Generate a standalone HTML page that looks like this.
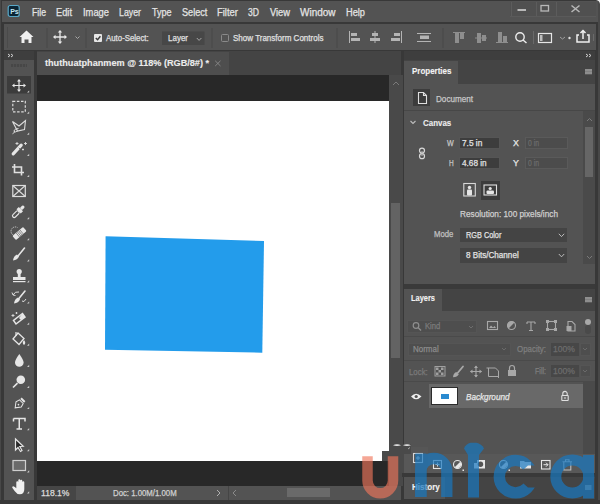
<!DOCTYPE html>
<html><head><meta charset="utf-8">
<style>
*{margin:0;padding:0;box-sizing:border-box}
html,body{width:600px;height:504px;overflow:hidden;background:#2e2e2e;font-family:"Liberation Sans",sans-serif;}
.a{position:absolute}
.t{position:absolute;white-space:nowrap;line-height:1;transform-origin:0 0;-webkit-text-stroke:0.25px currentColor}
.b{-webkit-text-stroke:0}
svg{position:absolute;left:0;top:0;overflow:visible}
</style></head><body>
<div class="a" style="left:0;top:0;width:600px;height:504px;background:#383838"></div>
<div class="a" style="left:0;top:0;width:1px;height:504px;background:#484848"></div>
<div class="a" style="left:597.5px;top:0;width:2.5px;height:504px;background:#484848"></div>
<!-- menu bar -->
<div class="a" style="left:1.5px;top:1px;width:596px;height:21px;background:#535353"></div>
<div class="a" style="left:510px;top:2px;width:86px;height:14px;background:#505050"></div>
<div class="a" style="left:510.5px;top:2px;width:1px;height:14px;background:#5c5c5c"></div>
<div class="a" style="left:535.5px;top:2px;width:1px;height:14px;background:#5c5c5c"></div>
<div class="a" style="left:556px;top:2px;width:1px;height:14px;background:#5c5c5c"></div>
<div class="a" style="left:510px;top:15.5px;width:86px;height:1px;background:#5a5a5a"></div>
<!-- options bar -->
<div class="a" style="left:3.5px;top:24px;width:592px;height:26px;background:#535353"></div>
<!-- toolbar -->
<div class="a" style="left:4px;top:51px;width:30px;height:449px;background:#535353"></div>
<div class="a" style="left:4px;top:51px;width:30px;height:9px;background:#3e3e3e"></div>
<!-- tab strip -->
<div class="a" style="left:37px;top:51px;width:364px;height:24px;background:#444444"></div>
<div class="a" style="left:37px;top:52px;width:192px;height:23px;background:#4e4e4e"></div>
<!-- pasteboard -->
<div class="a" style="left:37px;top:75px;width:352px;height:411px;background:#282828"></div>
<div class="a" style="left:37px;top:101px;width:352px;height:360px;background:#ffffff"></div>
<div class="a" style="left:382px;top:451px;width:7px;height:10px;background:#4a4a4a"></div>
<!-- v scrollbar -->
<div class="a" style="left:389px;top:75px;width:13.5px;height:411px;background:#494949"></div>
<div class="a" style="left:390.5px;top:202.8px;width:9.5px;height:155.3px;background:#636363"></div>
<!-- status bar -->
<div class="a" style="left:37px;top:486px;width:364px;height:14px;background:#535353"></div>
<div class="a" style="left:37px;top:486px;width:39px;height:14px;background:#464646"></div>
<div class="a" style="left:228px;top:486px;width:1px;height:14px;background:#454545"></div>
<div class="a" style="left:287px;top:488px;width:43px;height:9px;background:#6a6a6a"></div>
<!-- right column -->
<div class="a" style="left:404px;top:51px;width:191px;height:9px;background:#3e3e3e"></div>
<div class="a" style="left:404px;top:60px;width:191px;height:24px;background:#444444"></div>
<div class="a" style="left:404px;top:61px;width:54px;height:23px;background:#535353"></div>
<div class="a" style="left:404px;top:84px;width:191px;height:200px;background:#535353"></div>
<div class="a" style="left:404px;top:109.5px;width:191px;height:1.5px;background:#474747"></div>
<div class="a" style="left:413px;top:89px;width:17px;height:17px;background:#3c3c3c"></div>
<div class="a" style="left:583px;top:111px;width:12px;height:153px;background:#4a4a4a"></div>
<div class="a" style="left:585px;top:127px;width:8px;height:50px;background:#666666"></div>
<!-- canvas fields -->
<div class="a" style="left:458.5px;top:136.5px;width:41.5px;height:12.5px;background:#3d3d3d;border:1px solid #555555"></div>
<div class="a" style="left:458.5px;top:156.5px;width:41.5px;height:12.5px;background:#3d3d3d;border:1px solid #555555"></div>
<div class="a" style="left:524.5px;top:136.5px;width:43px;height:12.5px;background:#4c4c4c;border:1px solid #5a5a5a"></div>
<div class="a" style="left:524.5px;top:156.5px;width:43px;height:12.5px;background:#4c4c4c;border:1px solid #5a5a5a"></div>
<div class="a" style="left:480.5px;top:180.5px;width:19px;height:19px;background:#3c3c3c"></div>
<div class="a" style="left:460px;top:227.5px;width:106.5px;height:14.5px;background:#444444"></div>
<div class="a" style="left:460px;top:248px;width:106.5px;height:14.5px;background:#444444"></div>
<!-- layers -->
<div class="a" style="left:404px;top:284px;width:191px;height:4.5px;background:#3a3a3a"></div>
<div class="a" style="left:404px;top:288.5px;width:191px;height:22.5px;background:#444444"></div>
<div class="a" style="left:404px;top:288.5px;width:38px;height:22.5px;background:#535353"></div>
<div class="a" style="left:404px;top:311px;width:191px;height:164px;background:#535353"></div>
<div class="a" style="left:407px;top:320px;width:70px;height:13px;background:#4e4e4e;border:1px solid #555555"></div>
<div class="a" style="left:404px;top:336px;width:191px;height:1px;background:#4a4a4a"></div>
<div class="a" style="left:407.5px;top:342.5px;width:103.5px;height:13.5px;background:#4e4e4e;border:1px solid #555555"></div>
<div class="a" style="left:551px;top:343px;width:27.5px;height:12.5px;background:#474747"></div>
<div class="a" style="left:579.5px;top:343px;width:11px;height:12.5px;background:#4e4e4e;border:1px solid #555555"></div>
<div class="a" style="left:404px;top:359.5px;width:191px;height:1px;background:#4a4a4a"></div>
<div class="a" style="left:551px;top:365px;width:27.5px;height:11.5px;background:#474747"></div>
<div class="a" style="left:579.5px;top:365px;width:11px;height:11.5px;background:#4e4e4e;border:1px solid #555555"></div>
<div class="a" style="left:404px;top:381px;width:191px;height:1px;background:#4a4a4a"></div>
<div class="a" style="left:582.5px;top:382px;width:12.5px;height:93px;background:#4a4a4a"></div>
<div class="a" style="left:428.5px;top:384.3px;width:154px;height:24px;background:#696969"></div>
<div class="a" style="left:431px;top:387.3px;width:26.5px;height:17.5px;background:#ffffff;border:1px solid #2c2c2c"></div>
<div class="a" style="left:441px;top:394.2px;width:7.5px;height:5px;background:#2a8ad0"></div>
<div class="a" style="left:389px;top:444px;width:22px;height:28.5px;background:#4a4a4a"></div>
<div class="a" style="left:404px;top:453.5px;width:191px;height:19px;background:#585858"></div>
<div class="a" style="left:411px;top:447px;width:17px;height:25.5px;background:#565656"></div>
<div class="a" style="left:402px;top:472.5px;width:193px;height:4.5px;background:#393939"></div>
<div class="a" style="left:404px;top:477px;width:191px;height:21.5px;background:#444444"></div>
<div class="a" style="left:404px;top:477px;width:41px;height:21.5px;background:#535353"></div>
<div class="a" style="left:0;top:500px;width:600px;height:4px;background:#383838"></div>

<svg width="600" height="504">
 <!-- canvas shape -->
 <polygon points="105.6,236.3 264,241 262.3,352.7 105,349.7" fill="#239ceb"/>
 <!-- PS logo -->
 <rect x="8.2" y="5.5" width="11" height="11" rx="2" fill="#0b2535" stroke="#58a8c8" stroke-width="1.2"/>
 <text x="10.2" y="13.8" font-family="Liberation Sans" font-weight="bold" font-size="7" fill="#c8e8f4">Ps</text>
 <path d="M596,0 H600 V4 Q599.5,0.5 596,0Z" fill="#f0f0f0"/>
 <!-- window controls -->
 <rect x="517.5" y="9" width="8.5" height="2" fill="#b8b8b8"/>
 <rect x="541" y="5.5" width="7.5" height="5.5" fill="none" stroke="#b8b8b8" stroke-width="1.3"/>
 <path d="M571.5,5.5 L579.5,12 M579.5,5.5 L571.5,12" stroke="#b8b8b8" stroke-width="1.5"/>
 <!-- options bar -->
 <rect x="7" y="27" width="1" height="21" fill="#4a4a4a"/>
 <path d="M26.5,30.5 L33.5,37 L31.5,37 L31.5,43 L28.5,43 L28.5,39.5 L24.5,39.5 L24.5,43 L21.5,43 L21.5,37 L19.5,37 Z" fill="#f0f0f0"/>
 <path d="M60,31.5 V42.5 M54.5,37 H65.5" stroke="#e8e8e8" stroke-width="1.3" fill="none"/>
 <path d="M60,30 L62.2,32.5 H57.8Z M60,44 L62.2,41.5 H57.8Z M53,37 L55.5,34.8 V39.2Z M67,37 L64.5,34.8 V39.2Z" fill="#e8e8e8"/>
 <path d="M75.5,36.5 L77.5,38.5 L79.5,36.5" stroke="#a8a8a8" stroke-width="1" fill="none"/>
 <rect x="46.5" y="28" width="1" height="20" fill="#494949"/>
 <rect x="85.5" y="28" width="1" height="20" fill="#494949"/>
 <rect x="94" y="34" width="8" height="8" rx="1" fill="#e6e6e6"/>
 <path d="M95.8,38 L97.6,39.8 L100.4,36.2" stroke="#3a3a3a" stroke-width="1.4" fill="none"/>
 <rect x="162" y="31.5" width="42.5" height="13.5" fill="#474747"/>
 <path d="M196.8,38 L199.1,40.4 L201.4,38" stroke="#b0b0b0" stroke-width="0.9" fill="none"/>
 <rect x="211.5" y="28" width="1" height="20" fill="#494949"/>
 <rect x="221.5" y="34.5" width="7" height="7" rx="1" fill="none" stroke="#8a8a8a" stroke-width="1"/>
 <rect x="336.5" y="28" width="1" height="20" fill="#494949"/>
 <g fill="#b4b4b4">
  <rect x="349" y="31" width="1" height="12"/><rect x="351" y="33" width="6" height="3"/><rect x="351" y="38" width="9" height="3"/>
  <rect x="374.5" y="31" width="1" height="12"/><rect x="372" y="33" width="6" height="3"/><rect x="370" y="38" width="10" height="3"/>
  <rect x="401" y="31" width="1" height="12"/><rect x="394" y="33" width="6" height="3"/><rect x="391" y="38" width="9" height="3"/>
  <rect x="417" y="33" width="14" height="1"/><rect x="417" y="41" width="14" height="1"/><rect x="420" y="35.5" width="9" height="3.5"/>
 </g>
 <rect x="442.5" y="28" width="1" height="20" fill="#494949"/>
 <g fill="#8e8e8e">
  <rect x="453" y="32" width="12" height="1"/><rect x="455" y="33" width="4" height="10"/><rect x="460" y="33" width="4" height="6"/>
  <rect x="475" y="37.5" width="12" height="1"/><rect x="477" y="33" width="4" height="10"/><rect x="482" y="35" width="4" height="6"/>
  <rect x="496" y="42" width="12" height="1"/><rect x="498" y="32" width="4" height="10"/><rect x="503" y="36" width="4" height="6"/>
 </g>
 <circle cx="520" cy="37" r="4.2" stroke="#ececec" stroke-width="1.4" fill="none"/>
 <path d="M523,40 L526.5,43" stroke="#ececec" stroke-width="1.5"/>
 <rect x="533" y="31" width="1" height="13" fill="#6a6a6a"/>
 <rect x="538.5" y="33.5" width="13" height="9" stroke="#e6e6e6" stroke-width="1.2" fill="none"/>
 <rect x="540" y="35" width="2.5" height="6" fill="#bdbdbd"/>
 <path d="M560,37 L562.5,39 L565,37" stroke="#a0a0a0" stroke-width="1" fill="none"/>
 <circle cx="569.5" cy="38" r="1.2" fill="#e0e0e0"/>
 <path d="M579,35 H577 V42 H589 V35 H587" stroke="#f0f0f0" stroke-width="1.5" fill="none"/>
 <path d="M583,39 V31 M580.5,33 L583,30.5 L585.5,33" stroke="#f0f0f0" stroke-width="1.5" fill="none"/>
 <rect x="593" y="34" width="1" height="7" fill="#6a6a6a"/>
 <!-- toolbar header -->
 <path d="M8,54 L10,55.5 L8,57 M11,54 L13,55.5 L11,57" stroke="#d0d0d0" stroke-width="1" fill="none"/>
 <path d="M586,54 L588,55.5 L586,57 M589,54 L591,55.5 L589,57" stroke="#d0d0d0" stroke-width="1" fill="none"/>
 <path d="M11,65.5 H27" stroke="#474747" stroke-width="3" stroke-dasharray="2.2,0.8"/>
 <!-- tools -->
 <rect x="7" y="76" width="24" height="17.5" fill="#3c3c3c"/>
 <g stroke="#e6e6e6" fill="none" stroke-width="1.2">
  <path d="M19,80 V91 M13,85.5 H25"/>
 </g>
 <path d="M19,79 L21,81.5 H17Z M19,92 L21,89.5 H17Z M12,85.5 L14.5,83.5 V87.5Z M26,85.5 L23.5,83.5 V87.5Z" fill="#e6e6e6"/>
 <rect x="12.8" y="101.3" width="12.5" height="10.5" fill="none" stroke="#dcdcdc" stroke-width="1.2" stroke-dasharray="2.5,1.6"/>
 <path d="M12.5,121.5 L19,126 L25.5,120.5 L24.5,129.5 L17.5,131 Z" fill="none" stroke="#dcdcdc" stroke-width="1.1"/>
 <path d="M18.5,128.5 Q14.5,128.5 13.8,131.2 Q15,132.8 17.5,131 M15,131.8 L12.5,133.8" fill="none" stroke="#dcdcdc" stroke-width="1"/>
 <path d="M13.2,153.8 L21.2,145.2" stroke="#e6e6e6" stroke-width="3.2" stroke-linecap="round"/>
 <path d="M18.8,147.8 L19.8,148.8" stroke="#535353" stroke-width="0.9"/>
 <path d="M17,142 v3 M15.5,143.5 h3 M25.5,142 v3 M24,143.5 h3 M23,148.5 v2 M22,149.5 h2" stroke="#dcdcdc" stroke-width="0.9"/>
 <path d="M14.5,164 V172.5 H24 M12,167 H21.5 V175.5" fill="none" stroke="#e0e0e0" stroke-width="1.6"/>
 <rect x="12.8" y="185.5" width="12.5" height="11" fill="none" stroke="#dcdcdc" stroke-width="1.2"/>
 <path d="M12.8,185.5 L25.3,196.5 M25.3,185.5 L12.8,196.5" stroke="#dcdcdc" stroke-width="1.1"/>
 <g transform="rotate(-45 19 211)">
  <rect x="10.5" y="209.3" width="8" height="3.4" rx="1.7" fill="none" stroke="#e6e6e6" stroke-width="1.1"/>
  <rect x="18.5" y="208" width="3.2" height="6" fill="#e6e6e6"/>
  <rect x="21.5" y="209.5" width="4.5" height="3" rx="1.2" fill="#e6e6e6"/>
 </g>
 <g transform="rotate(-40 19.5 233.5)">
  <rect x="12.5" y="230.8" width="14" height="5.4" rx="1" fill="#e6e6e6"/>
  <path d="M17.3,230.8 V236.2 M18.9,230.8 V236.2 M20.5,230.8 V236.2 M22.1,230.8 V236.2" stroke="#6a6a6a" stroke-width="0.7"/>
 </g>
 <path d="M13.2,235 A4.3,4.3 0 0 1 17.5,227.5" stroke="#cfcfcf" stroke-width="0.9" fill="none" stroke-dasharray="1.3,0.8"/>
 <path d="M24.5,248 L18,256" stroke="#e6e6e6" stroke-width="1.6" stroke-linecap="round"/>
 <path d="M13,260.5 Q13.5,256 17,254.5 L19,256.5 Q17.5,260 13,260.5Z" fill="#e6e6e6"/>
 <circle cx="19.2" cy="271.5" r="2.6" fill="#e6e6e6"/>
 <rect x="17.8" y="273" width="2.8" height="4" fill="#e6e6e6"/>
 <rect x="13" y="277" width="12.5" height="3" fill="#e6e6e6"/>
 <rect x="13" y="281" width="12.5" height="1.2" fill="#e6e6e6"/>
 <path d="M25,291 L18.5,299" stroke="#e6e6e6" stroke-width="1.6" stroke-linecap="round"/>
 <path d="M14,303.5 Q14.5,299 18,297.5 L20,299.5 Q18.5,303 14,303.5Z" fill="#e6e6e6"/>
 <path d="M13,295 Q15,291 19,292 M13,295 L12,292.5 M13,295 L15.5,295.5 M22,301 Q24,303 26,299" stroke="#dcdcdc" stroke-width="1" fill="none"/>
 <path d="M16,324 L25,317 L22.5,313.5 L13.5,320.5 Z" fill="none" stroke="#e6e6e6" stroke-width="1.5"/>
 <path d="M19,318 L22.5,313.5 L25,317 L21,320Z" fill="#e6e6e6"/>
 <path d="M13,314 v3 M11.5,315.5 h3 M16.5,312 v2 M15.5,313 h2" stroke="#dcdcdc" stroke-width="0.9"/>
 <path d="M18,333 L13,339 L19,344.5 L24,338.5 Z" fill="none" stroke="#e6e6e6" stroke-width="1.3"/>
 <path d="M16,336 L16,332" stroke="#e6e6e6" stroke-width="1.2"/>
 <path d="M24,340 Q26.5,343 24,345 Q21.5,343 24,340Z" fill="#e6e6e6"/>
 <path d="M19.3,354 Q15,360 15,362.5 A4.3,4.3 0 0 0 23.6,362.5 Q23.6,360 19.3,354Z" fill="#e6e6e6"/>
 <circle cx="20.8" cy="379.8" r="4.3" fill="#e6e6e6"/>
 <path d="M17.5,383.2 L13,387.5" stroke="#e6e6e6" stroke-width="1.6"/>
 <g transform="translate(-0.3 0.8) rotate(45 19.5 403) translate(19.5 403) scale(0.82) translate(-19.5 -403)">
  <rect x="16.3" y="395.5" width="6.4" height="2.4" fill="#e6e6e6"/>
  <path d="M16.3,399.3 H22.7 L24,404 L19.5,410 L15,404 Z" fill="none" stroke="#e6e6e6" stroke-width="1.2"/>
  <circle cx="19.5" cy="404.3" r="1" fill="#e6e6e6"/>
 </g>
 <path d="M13.5,418.5 H25 V421.5 M13.5,418.5 V421.5 M19.25,418.5 V429 M16.5,429 H22" stroke="#e6e6e6" stroke-width="1.5" fill="none"/>
 <path d="M15.5,439 L15.5,450 L18,447.5 L20.5,451.5 L22,450.5 L19.8,446.5 L23.2,446.3 Z" fill="#2a2a2a" stroke="#e6e6e6" stroke-width="1.2"/>
 <rect x="13" y="460.5" width="12.5" height="10" fill="#6a6a6a" stroke="#cfcfcf" stroke-width="1.2"/>
 <g transform="translate(0.3 4.2)"><path d="M16,484 V478 Q16,477 17,477 Q18,477 18,478 V483 V476 Q18,475 19,475 Q20,475 20,476 V483 V476.5 Q20,475.5 21,475.5 Q22,475.5 22,476.5 V483 V478 Q22,477 23,477 Q24,477 24,478 V485 Q24,490 19.5,490 Q16.5,490 14.5,487 L12,483.5 Q11.5,482 13,482 Q14.5,482.5 16,484Z" fill="#f0f0f0"/></g>
 <g fill="#c8c8c8">
  <path d="M29.2,90.4 V92.6 H27Z"/><path d="M29.2,111.5 V113.7 H27Z"/><path d="M29.2,132.6 V134.8 H27Z"/><path d="M29.2,153.7 V155.9 H27Z"/><path d="M29.2,174.8 V177.0 H27Z"/><path d="M29.2,217.0 V219.2 H27Z"/><path d="M29.2,238.1 V240.3 H27Z"/><path d="M29.2,259.2 V261.4 H27Z"/><path d="M29.2,280.3 V282.5 H27Z"/><path d="M29.2,301.4 V303.6 H27Z"/><path d="M29.2,322.5 V324.7 H27Z"/><path d="M29.2,343.6 V345.8 H27Z"/><path d="M29.2,364.7 V366.9 H27Z"/><path d="M29.2,385.8 V388.0 H27Z"/><path d="M29.2,406.9 V409.1 H27Z"/><path d="M29.2,428.0 V430.2 H27Z"/><path d="M29.2,449.1 V451.3 H27Z"/><path d="M29.2,470.2 V472.4 H27Z"/><path d="M29.2,491.3 V493.5 H27Z"/>
 </g>
 <!-- tab close -->
 <path d="M215.2,60.8 L220.5,66 M220.5,60.8 L215.2,66" stroke="#8e8e8e" stroke-width="0.85"/>
 <!-- scroll arrows -->
 <path d="M393,85 L396,82 L399,85" stroke="#7a7a7a" stroke-width="1" fill="none"/>
 <path d="M587,121 L589.5,118.5 L592,121" stroke="#7a7a7a" stroke-width="1" fill="none"/>
 <path d="M587,256 L589.5,258.5 L592,256" stroke="#7a7a7a" stroke-width="1" fill="none"/>
 <path d="M217,490 L220,493 L217,496" stroke="#b0b0b0" stroke-width="1" fill="none"/>
 <path d="M236,490 L233,493 L236,496" stroke="#8a8a8a" stroke-width="1" fill="none"/>
 <!-- properties -->
 <rect x="585" y="69" width="7" height="5.3" fill="#8e8e8e"/><rect x="585" y="71.3" width="7" height="0.6" fill="#7a7a7a"/>
 <path d="M418.5,92.5 H423.5 L426.5,95.5 V103.5 H418.5 Z M423.5,92.5 V95.5 H426.5" fill="none" stroke="#dedede" stroke-width="1.1"/>
 <path d="M410.5,121 L413,123.5 L415.5,121" stroke="#bdbdbd" stroke-width="1.1" fill="none"/>
 <circle cx="422" cy="150.6" r="2.5" stroke="#d8d8d8" stroke-width="1.2" fill="none"/>
 <circle cx="422" cy="156.2" r="2.5" stroke="#d8d8d8" stroke-width="1.2" fill="none"/>
 <path d="M422,151 V156" stroke="#bdbdbd" stroke-width="1"/>
 <rect x="463.8" y="183.5" width="11.5" height="12.5" stroke="#d8d8d8" stroke-width="1.1" fill="none"/>
 <circle cx="469.5" cy="187.5" r="1.7" fill="#e6e6e6"/><rect x="467" y="189.5" width="5" height="6" rx="1" fill="#e6e6e6"/>
 <rect x="484" y="185" width="12.5" height="10" stroke="#e0e0e0" stroke-width="1.1" fill="none"/>
 <circle cx="490.2" cy="188.5" r="1.6" fill="#e6e6e6"/><rect x="486.5" y="190.5" width="7.5" height="3.5" rx="1" fill="#e6e6e6"/>
 <path d="M558.8,233.8 L561.5,236.6 L564.2,233.8" stroke="#c8c8c8" stroke-width="0.9" fill="none"/>
 <path d="M558.8,254 L561.5,256.8 L564.2,254" stroke="#c8c8c8" stroke-width="0.9" fill="none"/>
 <!-- layers -->
 <rect x="585" y="297" width="7" height="5.3" fill="#8e8e8e"/><rect x="585" y="299.3" width="7" height="0.6" fill="#7a7a7a"/>
 <circle cx="416" cy="325.5" r="2.8" stroke="#8e8e8e" stroke-width="1.2" fill="none"/>
 <path d="M418,327.5 L421,330.5" stroke="#8e8e8e" stroke-width="1.4"/>
 <path d="M469,326 L471,328 L473,326" stroke="#6e6e6e" stroke-width="1" fill="none"/>
 <g stroke="#a8a8a8" fill="none" stroke-width="1.1">
  <rect x="487.5" y="321.5" width="10" height="8"/>
  <circle cx="511.5" cy="325.5" r="4"/>
  <path d="M531,322 V330.5 M527,322 H535 M527,322 V324 M535,322 V324 M529,330.5 H533"/>
  <rect x="547.5" y="321.5" width="8" height="8"/>
 </g>
 <path d="M489,328 L491,325.5 L493,327.5 L494.5,326 L496,328Z" fill="#a8a8a8"/>
 <path d="M508.6,328.4 A4,4 0 0 1 514.4,322.6Z" fill="#a8a8a8"/>
 <g fill="#a8a8a8"><rect x="546" y="320" width="3" height="3"/><rect x="554" y="320" width="3" height="3"/><rect x="546" y="328" width="3" height="3"/><rect x="554" y="328" width="3" height="3"/></g>
 <path d="M568,321.5 H572 L575,324.5 V331 H568Z" fill="none" stroke="#a8a8a8" stroke-width="1.1"/>
 <rect x="566.5" y="326" width="5" height="5" fill="#a8a8a8"/>
 <rect x="585" y="325" width="6" height="9" rx="3" fill="#4a4a4a"/>
 <circle cx="588" cy="322" r="3" fill="#a8a8a8"/>
 <path d="M502,348 L504,350 L506,348" stroke="#6a6a6a" stroke-width="1" fill="none"/>
 <path d="M583,348 L585,350 L587,348" stroke="#6a6a6a" stroke-width="1" fill="none"/>
 <path d="M583,370 L585,372 L587,370" stroke="#6a6a6a" stroke-width="1" fill="none"/>
 <g fill="#a0a0a0">
  <rect x="435" y="366.5" width="10" height="9.5" fill="none" stroke="#a0a0a0" stroke-width="1"/>
  <rect x="436" y="367.5" width="2.5" height="2.5"/><rect x="441" y="367.5" width="2.5" height="2.5"/>
  <rect x="438.5" y="370" width="2.5" height="2.5"/><rect x="436" y="372.5" width="2.5" height="2.5"/><rect x="441" y="372.5" width="2.5" height="2.5"/>
 </g>
 <path d="M463,366.5 L457.8,372.8" stroke="#a8a8a8" stroke-width="1.8" stroke-linecap="round"/>
 <path d="M453,377.3 Q453.2,373.3 456.3,372 L458.8,374.3 Q457.3,377.3 453,377.3Z" fill="#a8a8a8"/>
 <path d="M476,366 V377 M470.5,371.5 H481.5" stroke="#a8a8a8" stroke-width="1.1"/>
 <path d="M476,365.5 L478,368 H474Z M476,377.5 L478,375 H474Z M470,371.5 L472.5,369.5 V373.5Z M482,371.5 L479.5,369.5 V373.5Z" fill="#a8a8a8"/>
 <path d="M488.5,368 V376.5 H499 M486.5,368 H495.5 L498.5,371 V378" stroke="#a8a8a8" stroke-width="1" fill="none"/>
 <path d="M509.5,370 V368 A2.5,2.5 0 0 1 514.5,368 V370" stroke="#a8a8a8" stroke-width="1.2" fill="none"/>
 <rect x="508" y="370" width="8" height="6" fill="#a8a8a8"/>
 <path d="M411,396.5 Q416,391 421.5,396.5 Q416,402 411,396.5Z" fill="#f0f0f0"/>
 <circle cx="416.2" cy="396.5" r="1.6" fill="#535353"/>
 <path d="M562.8,395.5 V393.6 A2.2,2.2 0 0 1 567.2,393.6 V395.5" stroke="#e0e0e0" stroke-width="1.1" fill="none"/>
 <rect x="561.8" y="395.5" width="6.4" height="5" rx="0.5" fill="none" stroke="#e0e0e0" stroke-width="1.1"/>
 <rect x="564.5" y="397" width="1" height="2" fill="#e0e0e0"/>
 <!-- footer -->
 <path d="M393,445.3 Q397,443.3 401,445.3 Q397,446.6 393,445.3Z M403,445.3 Q407,443.3 411,445.3 Q407,446.6 403,445.3Z" fill="#e8e8e8"/>
 <path d="M408,449 L410,447.5" stroke="#bdbdbd" stroke-width="0.8"/>
 <rect x="413.5" y="453.5" width="9" height="9" fill="none" stroke="#d8d8d8" stroke-width="1.1"/>
 <path d="M418,456 V460 M416,458 H420" stroke="#d8d8d8" stroke-width="1"/>
 <rect x="433.5" y="460.5" width="8" height="8" fill="none" stroke="#e6e6e6" stroke-width="1.1"/>
 <path d="M437.5,462.5 V466.5 M435.5,464.5 H439.5" stroke="#e6e6e6" stroke-width="1"/>
 <circle cx="457.5" cy="464.5" r="4" fill="none" stroke="#e6e6e6" stroke-width="1.1"/>
 <path d="M454.7,467.3 A4,4 0 0 0 460.3,461.7Z" fill="#e6e6e6"/>
 <rect x="462.5" y="469.5" width="1.5" height="1.5" fill="#e6e6e6"/>
 <rect x="474" y="460" width="11" height="8.5" fill="#e6e6e6"/>
 <circle cx="480.5" cy="464.2" r="2.7" fill="#535353"/>
 <rect x="474" y="460" width="3" height="3" fill="#535353"/>
 <circle cx="503.5" cy="464.5" r="4" fill="none" stroke="#e6e6e6" stroke-width="1.1"/>
 <path d="M500.7,467.3 A4,4 0 0 0 506.3,461.7Z" fill="#e6e6e6"/>
 <rect x="508.5" y="469.5" width="1.5" height="1.5" fill="#e6e6e6"/>
 <path d="M520,461 H524 L525,462 H531 V468.5 H520Z" fill="#e6e6e6"/>
 <rect x="541.5" y="460.5" width="8.5" height="8.5" fill="none" stroke="#e6e6e6" stroke-width="1.1"/>
 <path d="M543.5,464.7 H548 M546,462.7 L548,464.7 L546,466.7" stroke="#e6e6e6" stroke-width="1" fill="none"/>
 <path d="M562.5,461.8 H572 M565.5,461.8 V459.8 H569 V461.8 M563.8,462 V470 H570.8 V462" stroke="#c0c0c0" stroke-width="1.1" fill="none"/>
 <rect x="585" y="485" width="6.5" height="5" fill="#8a8a8a"/>
</svg>
<div class="t" id="t0" style="left:32.00px;top:8.00px;font-size:10px;color:#e4e4e4;transform:scaleX(0.868);">File</div>
<div class="t" id="t1" style="left:56.00px;top:8.00px;font-size:10px;color:#e4e4e4;transform:scaleX(0.928);">Edit</div>
<div class="t" id="t2" style="left:83.00px;top:8.00px;font-size:10px;color:#e4e4e4;transform:scaleX(0.935);">Image</div>
<div class="t" id="t3" style="left:119.00px;top:8.00px;font-size:10px;color:#e4e4e4;transform:scaleX(0.879);">Layer</div>
<div class="t" id="t4" style="left:152.00px;top:8.00px;font-size:10px;color:#e4e4e4;transform:scaleX(0.904);">Type</div>
<div class="t" id="t5" style="left:181.60px;top:8.00px;font-size:10px;color:#e4e4e4;transform:scaleX(0.914);">Select</div>
<div class="t" id="t6" style="left:217.00px;top:8.00px;font-size:10px;color:#e4e4e4;transform:scaleX(0.944);">Filter</div>
<div class="t" id="t7" style="left:248.00px;top:8.00px;font-size:10px;color:#e4e4e4;transform:scaleX(0.860);">3D</div>
<div class="t" id="t8" style="left:270.00px;top:8.00px;font-size:10px;color:#e4e4e4;transform:scaleX(0.930);">View</div>
<div class="t" id="t9" style="left:300.00px;top:8.00px;font-size:10px;color:#e4e4e4;transform:scaleX(1.001);">Window</div>
<div class="t" id="t10" style="left:346.00px;top:8.00px;font-size:10px;color:#e4e4e4;transform:scaleX(0.923);">Help</div>
<div class="t" id="t11" style="left:106.00px;top:34.00px;font-size:9px;color:#e0e0e0;transform:scaleX(0.871);">Auto-Select:</div>
<div class="t" id="t12" style="left:168.00px;top:34.00px;font-size:9px;color:#e0e0e0;transform:scaleX(0.888);">Layer</div>
<div class="t" id="t13" style="left:232.50px;top:34.00px;font-size:9px;color:#e0e0e0;transform:scaleX(0.891);">Show Transform Controls</div>
<div class="t" id="t14" style="left:45.00px;top:59.00px;font-size:9px;color:#ececec;font-weight:bold;-webkit-text-stroke:0.12px currentColor;transform:scaleX(1.014);">thuthuatphanmem @ 118% (RGB/8#) *</div>
<div class="t" id="t15" style="left:41.30px;top:489.00px;font-size:8.5px;color:#dcdcdc;transform:scaleX(1.007);">118.1%</div>
<div class="t" id="t16" style="left:113.00px;top:489.00px;font-size:8.5px;color:#d0d0d0;transform:scaleX(0.917);">Doc: 1.00M/1.00M</div>
<div class="t" id="t17" style="left:411.60px;top:67.00px;font-size:8.5px;color:#f2f2f2;font-weight:bold;-webkit-text-stroke:0.12px currentColor;transform:scaleX(0.937);">Properties</div>
<div class="t" id="t18" style="left:435.70px;top:95.00px;font-size:9px;color:#c8c8c8;transform:scaleX(0.903);">Document</div>
<div class="t" id="t19" style="left:422.75px;top:119.00px;font-size:9px;color:#ececec;font-weight:bold;-webkit-text-stroke:0.12px currentColor;transform:scaleX(0.882);">Canvas</div>
<div class="t" id="t20" style="left:447.00px;top:139.00px;font-size:8.5px;color:#c8c8c8;transform:scaleX(0.834);">W</div>
<div class="t" id="t21" style="left:461.70px;top:139.00px;font-size:8.5px;color:#e2e2e2;transform:scaleX(0.976);">7.5 in</div>
<div class="t" id="t22" style="left:449.00px;top:159.00px;font-size:8.5px;color:#c8c8c8;transform:scaleX(0.765);">H</div>
<div class="t" id="t23" style="left:461.70px;top:159.00px;font-size:8.5px;color:#e2e2e2;transform:scaleX(0.964);">4.68 in</div>
<div class="t" id="t24" style="left:513.30px;top:139.00px;font-size:8.5px;color:#e8e8e8;transform:scaleX(1.040);">X</div>
<div class="t" id="t25" style="left:528.00px;top:139.00px;font-size:8.5px;color:#6c6c6c;transform:scaleX(0.802);">0 in</div>
<div class="t" id="t26" style="left:513.30px;top:159.00px;font-size:8.5px;color:#e8e8e8;transform:scaleX(1.040);">Y</div>
<div class="t" id="t27" style="left:528.00px;top:159.00px;font-size:8.5px;color:#6c6c6c;transform:scaleX(0.802);">0 in</div>
<div class="t" id="t28" style="left:460.00px;top:210.00px;font-size:8.5px;color:#cfcfcf;transform:scaleX(0.969);">Resolution: 100 pixels/inch</div>
<div class="t" id="t29" style="left:433.70px;top:230.00px;font-size:8.5px;color:#c0c0c0;transform:scaleX(0.908);">Mode</div>
<div class="t" id="t30" style="left:466.30px;top:231.00px;font-size:8.5px;color:#e2e2e2;transform:scaleX(0.861);">RGB Color</div>
<div class="t" id="t31" style="left:466.30px;top:251.00px;font-size:8.5px;color:#e2e2e2;transform:scaleX(0.953);">8 Bits/Channel</div>
<div class="t" id="t32" style="left:411.30px;top:294.00px;font-size:8.5px;color:#f2f2f2;font-weight:bold;-webkit-text-stroke:0.12px currentColor;transform:scaleX(0.875);">Layers</div>
<div class="t" id="t33" style="left:424.70px;top:322.00px;font-size:8.5px;color:#7c7c7c;transform:scaleX(0.899);">Kind</div>
<div class="t" id="t34" style="left:413.30px;top:345.00px;font-size:8.5px;color:#8c8c8c;transform:scaleX(0.938);">Normal</div>
<div class="t" id="t35" style="left:517.00px;top:345.00px;font-size:8.5px;color:#7e7e7e;transform:scaleX(0.930);">Opacity:</div>
<div class="t" id="t36" style="left:553.00px;top:345.00px;font-size:8.5px;color:#6c6c6c;transform:scaleX(1.011);">100%</div>
<div class="t" id="t37" style="left:408.70px;top:368.00px;font-size:8.5px;color:#7a7a7a;transform:scaleX(0.925);">Lock:</div>
<div class="t" id="t38" style="left:535.00px;top:367.00px;font-size:8.5px;color:#7e7e7e;transform:scaleX(0.831);">Fill:</div>
<div class="t" id="t39" style="left:553.00px;top:367.00px;font-size:8.5px;color:#6c6c6c;transform:scaleX(1.011);">100%</div>
<div class="t" id="t40" style="left:465.80px;top:393.00px;font-size:8.5px;color:#e6e6e6;font-style:italic;transform:scaleX(0.959);">Background</div>
<div class="t" id="t41" style="left:411.50px;top:483.00px;font-size:8.5px;color:#f0f0f0;font-weight:bold;-webkit-text-stroke:0.12px currentColor;transform:scaleX(0.949);">History</div>
<svg width="600" height="504">
 <defs><clipPath id="cclip"><path d="M488,440 H545 V465.5 H528 L515.5,476.6 L528,487.5 H545 V505 H488Z"/></clipPath></defs>
 <g fill="none" stroke-linecap="butt">
  <path d="M367.5,456.3 V480.6 A12.75,12.75 0 0 0 393,480.6 V456.3" stroke="#f0765a" stroke-width="10.5" opacity="0.64"/>
  <g stroke="#1878c0" opacity="0.7">
   <path d="M420.8,497 V471.5 A13,13 0 0 1 446.8,471.5 V497" stroke-width="11.3"/>
   <rect x="415.2" y="453.5" width="11.3" height="43.5" fill="#1878c0" stroke="none"/>
   <path d="M473.5,497.5 V452" stroke-width="11"/>
   <circle cx="515.55" cy="476.65" r="16.25" stroke-width="11.4" clip-path="url(#cclip)"/>
   <circle cx="572.3" cy="476.5" r="16.5" stroke-width="11"/>
   <path d="M588.5,455 V498.5" stroke-width="11"/>
   <path d="M468,455 L464,448.5 Q466,443.8 470.5,442.8 H476.5 Q481.5,443.8 484,448.5 L479,455 Z" fill="#1878c0" stroke="none"/>
  </g>
 </g>
</svg>

</body></html>
